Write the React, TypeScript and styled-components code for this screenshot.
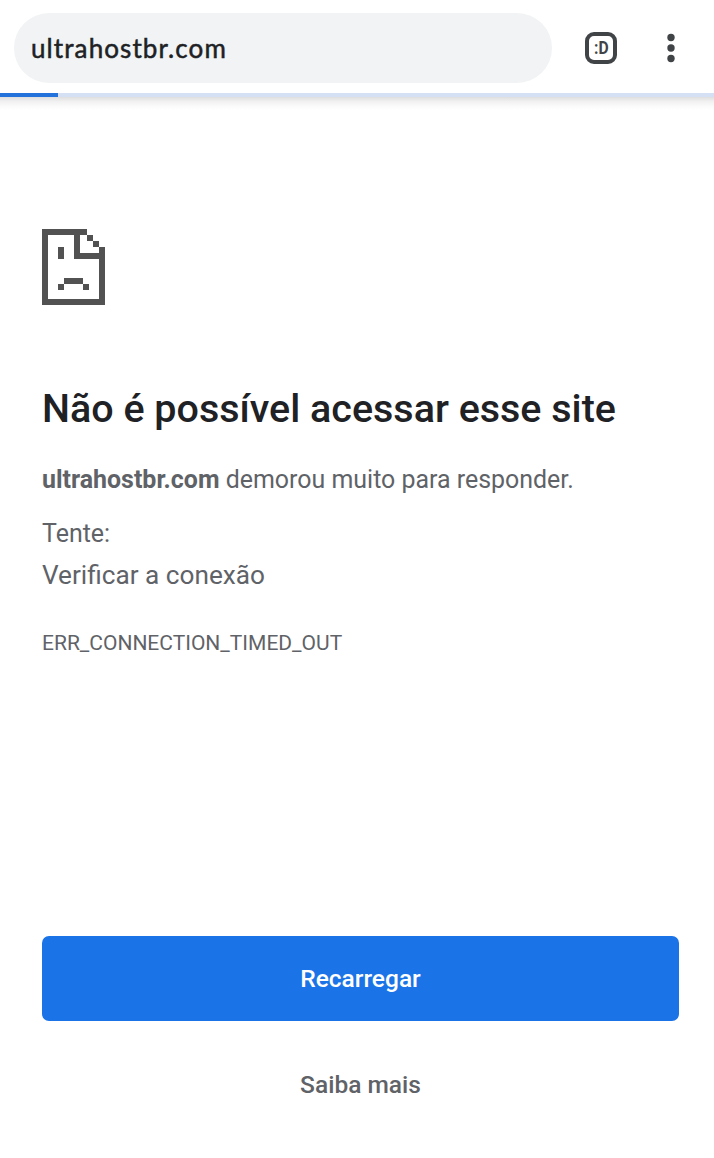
import React from "react";
import styled, { createGlobalStyle } from "styled-components";

const GlobalStyle = createGlobalStyle`
  * { box-sizing: border-box; }
  body { margin: 0; background: #fff; font-family: Roboto, sans-serif; }
`;

const Screen = styled.div`
  display: flex;
  flex-direction: column;
  width: 100%;
  height: 1158px;
  overflow: hidden;
`;

const Toolbar = styled.header`
  display: flex;
  align-items: center;
  height: 93px;
  padding: 3px 35px 0 14px;
`;

const AddressBar = styled.div`
  display: flex;
  align-items: center;
  width: 538px;
  height: 70px;
  padding: 0 18px 0 17px;
  border-radius: 35px;
  background: #f1f3f4;
  color: #202124;
  font: 400 26px/32px Lato, sans-serif;
  letter-spacing: 1.1px;
  -webkit-text-stroke: 0.5px #202124;
`;

const TabSwitcher = styled.button`
  display: flex;
  align-items: center;
  justify-content: center;
  width: 32px;
  height: 32px;
  margin-left: 33px;
  padding: 0;
  border: 4px solid #414447;
  border-radius: 9px;
  background: none;
  color: #414447;
  font: 700 18px/20px Roboto, sans-serif;
`;

const TabFace = styled.span`
  display: block;
  transform: scaleX(0.87);
`;

const MenuButton = styled.button`
  display: flex;
  justify-content: center;
  width: 16px;
  margin-left: auto;
  padding: 0;
  border: 0;
  background: none;
`;

const ProgressTrack = styled.div`
  flex: none;
  height: 4px;
  background: #d5e0f5;
`;

const ProgressValue = styled.div`
  width: 58px;
  height: 100%;
  background: #2371da;
`;

const ToolbarShadow = styled.div`
  flex: none;
  height: 13px;
  background: linear-gradient(#dedede, #f1f1f1 35%, #fafafa 70%, #fff);
`;

const Content = styled.main`
  display: flex;
  flex-direction: column;
  padding: 119px 35px 0 42px;
  color: #5f6368;
`;

const Title = styled.h1`
  margin: 80px 0 0;
  color: #202124;
  font-size: 39.45px;
  font-weight: 500;
  line-height: 48px;
  white-space: nowrap;
`;

const Line = styled.p<{ $top: number; $size?: number }>`
  margin: ${(p) => p.$top}px 0 0;
  font-size: ${(p) => p.$size ?? 24.95}px;
  line-height: 32px;
  white-space: nowrap;
`;

const Actions = styled.div`
  display: flex;
  flex-direction: column;
  margin-top: 277px;
`;

const ActionButton = styled.button<{ $primary?: boolean }>`
  height: 85px;
  padding: 0;
  border: 0;
  border-radius: 7px;
  background: ${(p) => (p.$primary ? "#1b73e8" : "transparent")};
  color: ${(p) => (p.$primary ? "#fff" : "#5f6368")};
  font: 500 24.5px/32px Roboto, sans-serif;

  & + & { margin-top: 21px; }
`;

const MoreIcon = () => (
  <svg width="8" height="30" viewBox="0 0 8 30" fill="#414447">
    <circle cx="4" cy="4.5" r="3.7" />
    <circle cx="4" cy="15" r="3.7" />
    <circle cx="4" cy="25.5" r="3.7" />
  </svg>
);

const SadPage = () => (
  <svg width="63" height="76" viewBox="0 0 63 76" fill="#525252" shapeRendering="crispEdges">
    <path d="M0 0H45V6H6V70H57V18H63V76H0Z" />
    <path d="M32 6H38V24H57V30H32Z" />
    <path d="M45 6H51V12H45ZM51 12H57V18H51Z" />
    <path d="M16 18H22V30H16ZM22 49H41V55H22ZM16 55H22V61H16ZM41 55H47V61H41Z" />
  </svg>
);

export default function App() {
  return (
    <Screen>
      <GlobalStyle />
      <Toolbar>
        <AddressBar>ultrahostbr.com</AddressBar>
        <TabSwitcher><TabFace>:D</TabFace></TabSwitcher>
        <MenuButton aria-label="Menu"><MoreIcon /></MenuButton>
      </Toolbar>
      <ProgressTrack><ProgressValue /></ProgressTrack>
      <ToolbarShadow />
      <Content>
        <SadPage />
        <Title>Não é possível acessar esse site</Title>
        <Line $top={31}><strong>ultrahostbr.com</strong> demorou muito para responder.</Line>
        <Line $top={22}>Tente:</Line>
        <Line $top={9} $size={26.2}>Verificar a conexão</Line>
        <Line $top={36} $size={21}>ERR_CONNECTION_TIMED_OUT</Line>
        <Actions>
          <ActionButton $primary>Recarregar</ActionButton>
          <ActionButton>Saiba mais</ActionButton>
        </Actions>
      </Content>
    </Screen>
  );
}
